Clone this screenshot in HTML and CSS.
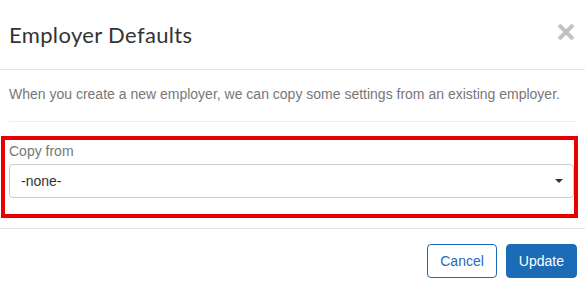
FILE: index.html
```html
<!DOCTYPE html>
<html>
<head>
<meta charset="utf-8">
<link rel="stylesheet" href="styles.css">
</head>
<body>
<div class="modal">
  <div class="modal-header">
    <h4 class="modal-title">Employer Defaults</h4>
    <span class="close" aria-label="Close">
      <svg width="18" height="18" viewBox="0 0 18 18"><path d="M2 2 L16 16 M16 2 L2 16" stroke="#c2c2c2" stroke-width="4" stroke-linecap="butt"/></svg>
    </span>
  </div>
  <div class="modal-body">
    <p class="intro">When you create a new employer, we can copy some settings from an existing employer.</p>
    <hr class="divider">
    <div class="highlight">
      <label class="field-label">Copy from</label>
      <div class="select">
        <span class="select-value">-none-</span>
        <span class="caret"></span>
      </div>
    </div>
  </div>
  <div class="modal-footer">
    <button class="btn btn-outline">Cancel</button>
    <button class="btn btn-primary">Update</button>
  </div>
</div>
</body>
</html>
```
FILE: styles.css
```css
html, body {
  margin: 0;
  padding: 0;
  background: #fff;
}
body {
  font-family: "Liberation Sans", Arial, sans-serif;
  font-size: 14px;
  line-height: 20px;
  color: #333;
}
.modal {
  width: 585px;
}
.modal-header {
  height: 70px;
  box-sizing: border-box;
  padding: 0 10px 0 9px;
  display: flex;
  align-items: center;
  justify-content: space-between;
  border-bottom: 1px solid #e5e5e5;
}
.modal-title {
  margin: 0;
  font-family: "Lato", "Noto Sans", sans-serif;
  font-weight: 400;
  font-size: 22px;
  letter-spacing: 0.35px;
  line-height: 24px;
  color: #333;
}
.close {
  display: flex;
  width: 18px;
  height: 18px;
  margin-top: -6px;
}
.modal-body {
  padding: 14px 8px 10px 9px;
}
.intro {
  margin: 0;
  color: #777;
}
.divider {
  margin: 17px 0 0;
  border: 0;
  height: 1px;
  background: #eee;
}
.highlight {
  margin: 14px -1px 0 -8px;
  border: 4px solid #e60000;
  padding: 1px 0 16px 4px;
}
.field-label {
  display: block;
  color: #777;
}
.select {
  margin-top: 3px;
  height: 34px;
  box-sizing: border-box;
  border: 1px solid #ccc;
  border-radius: 4px;
  display: flex;
  align-items: center;
  justify-content: space-between;
  padding: 0 10px 0 11px;
  color: #333;
}
.caret {
  width: 0;
  height: 0;
  border-left: 4px solid transparent;
  border-right: 4px solid transparent;
  border-top: 4px solid #333;
}
.modal-footer {
  border-top: 1px solid #e5e5e5;
  padding: 15px 8px 0 0;
  display: flex;
  justify-content: flex-end;
  gap: 9px;
}
.btn {
  font-family: "Liberation Sans", Arial, sans-serif;
  font-size: 14px;
  line-height: 20px;
  height: 34px;
  box-sizing: border-box;
  padding: 6px 12px;
  border-radius: 4px;
  border: 1px solid #1c6bb7;
  cursor: pointer;
}
.btn-outline {
  background: #fff;
  color: #1c6bb7;
}
.btn-primary {
  background: #1c6bb7;
  color: #fff;
}
```
